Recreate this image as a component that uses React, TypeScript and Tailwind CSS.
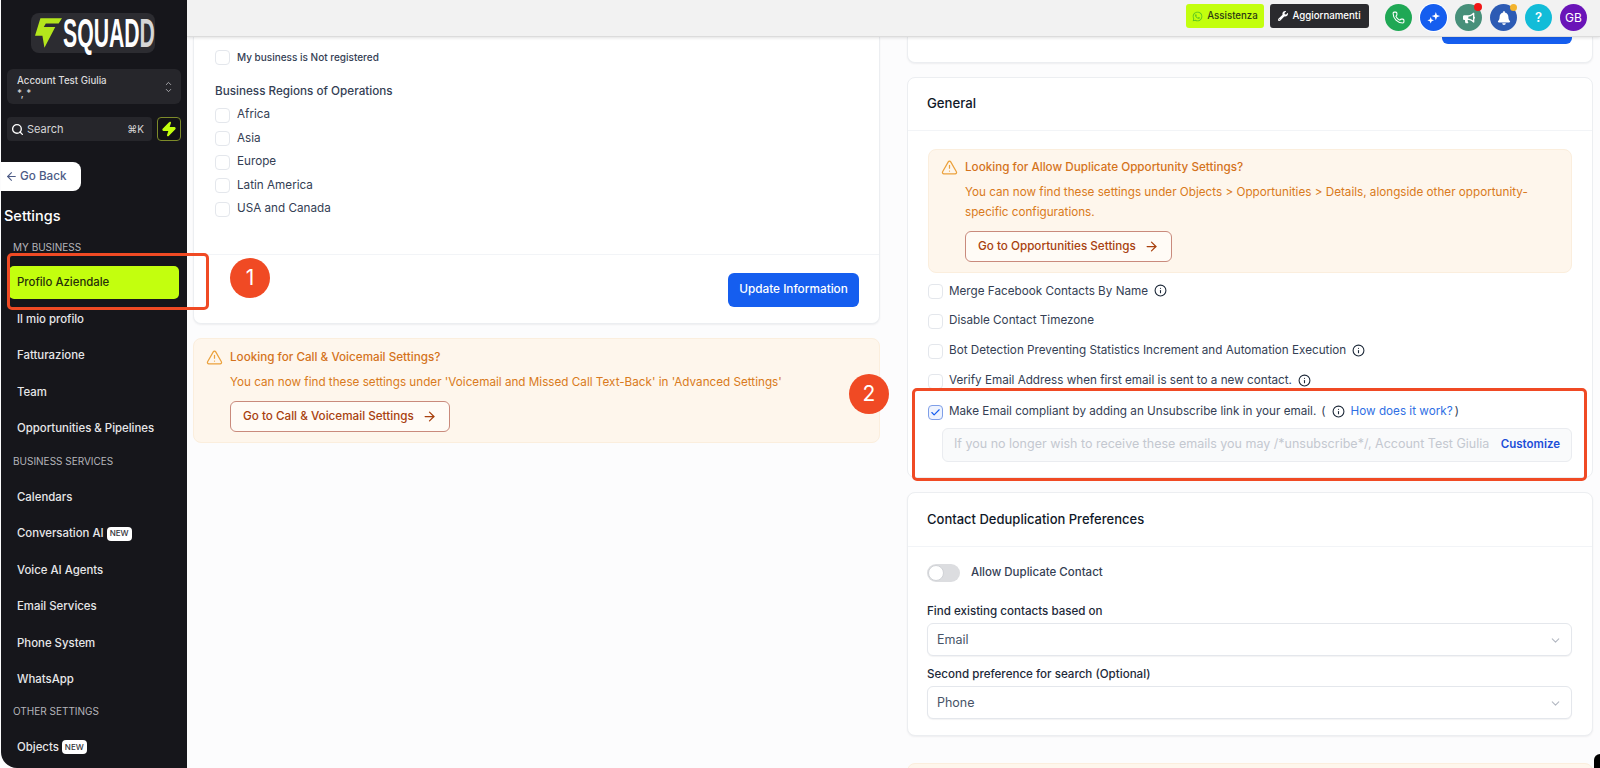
import { useState } from "react";
import {
  ArrowLeft,
  ArrowRight,
  Check,
  ChevronDown,
  ChevronUp,
  Info,
  Phone,
  Search,
  TriangleAlert,
  Zap,
} from "lucide-react";
import { FaBell, FaBullhorn, FaWhatsapp, FaWrench } from "react-icons/fa";

function NavItem({ label, badge }: { label: string; badge?: boolean }) {
  return (
    <div className="flex h-[36.5px] items-center gap-[3px] pl-[16px] text-[11.4px] font-medium text-[#e6e6e8]">
      {label}
      {badge && (
        <span className="rounded-[4px] bg-white px-[3px] py-[1.5px] text-[8px] leading-[11px] font-medium text-[#33343a]">
          NEW
        </span>
      )}
    </div>
  );
}

function NavHeading({ label, className }: { label: string; className: string }) {
  return (
    <div className={`h-3 pl-[12px] text-[10px] leading-3 text-[#b5b5ba] uppercase ${className}`}>
      {label}
    </div>
  );
}

function Sidebar() {
  return (
    <aside className="ml-px flex h-full w-[186px] shrink-0 flex-col overflow-hidden rounded-bl-2xl bg-[#16161b] pt-[13px]">
      <div className="ml-[30px] flex h-10 w-[124px] items-center rounded-lg bg-[#2c2c31] pl-1">
        <svg viewBox="0 0 80 88" className="h-[30px] w-[27px] shrink-0">
          <path d="M16 0H80L70 16H32L26 26H60L28 88L22 52H0Z" fill="#b4e61c" />
        </svg>
        <div className="ml-px w-[88px] shrink-0">
          <span className="block origin-left scale-x-[0.53] font-['Liberation_Sans',sans-serif] text-[40px] leading-none font-bold whitespace-nowrap text-white">
            SQUAD<span className="text-[#d6d6d6]">D</span>
          </span>
        </div>
      </div>

      <div className="mx-[6px] mt-4 flex h-[35px] items-center justify-between rounded-md bg-[#26262b] pr-2 pl-[10px]">
        <div className="text-[9.7px] leading-[13px] font-medium text-[#dcdcde]">
          <div>Account Test Giulia</div>
          <div>*, *</div>
        </div>
        <div className="flex flex-col text-[#c8c8cc]">
          <ChevronUp className="-mb-0.5 h-[9px] w-[9px]" />
          <ChevronDown className="h-[9px] w-[9px]" />
        </div>
      </div>

      <div className="mx-[6px] mt-[13px] flex h-6 gap-[5px]">
        <div className="flex w-[145px] items-center rounded bg-[#26262b] pr-2 pl-[4px] text-[11px] text-[#d6d6d8]">
          <Search className="mr-[3px] h-[13px] w-[13px] text-white" strokeWidth={2.5} />
          <span>Search</span>
          <span className="ml-auto text-[10px]">⌘K</span>
        </div>
        <div className="flex h-6 w-6 items-center justify-center rounded border border-[#7d8a2a] bg-[#121214]">
          <Zap className="h-4 w-4 fill-[#c3ff0e] text-[#c3ff0e]" />
        </div>
      </div>

      <div className="-ml-px mt-[21px] flex h-[29px] w-[81px] items-center rounded-r-lg bg-white pl-[5px] text-[11.7px] font-medium text-[#4d5b86]">
        <ArrowLeft className="mr-[2px] h-[13px] w-[13px]" />
        Go Back
      </div>

      <div className="mt-[13px] h-6 pl-[3px] text-[14.5px] leading-6 font-medium text-white">Settings</div>
      <NavHeading label="My Business" className="mt-[13px]" />
      <div className="mt-[13px] ml-2 flex h-[33px] w-[170px] items-center rounded-[5px] bg-[#c3ff0e] pl-2 text-[11.4px] font-medium text-[#26300a]">
        Profilo Aziendale
      </div>
      <div className="mt-0.5">
        <NavItem label="Il mio profilo" />
        <NavItem label="Fatturazione" />
        <NavItem label="Team" />
        <NavItem label="Opportunities & Pipelines" />
      </div>
      <NavHeading label="Business Services" className="mt-[8px]" />
      <div className="mt-[12px]">
        <NavItem label="Calendars" />
        <NavItem label="Conversation AI" badge />
        <NavItem label="Voice AI Agents" />
        <NavItem label="Email Services" />
        <NavItem label="Phone System" />
        <NavItem label="WhatsApp" />
      </div>
      <NavHeading label="Other Settings" className="mt-[7px]" />
      <div className="mt-[12px]">
        <NavItem label="Objects" badge />
      </div>
    </aside>
  );
}

function RoundIcon({ className, children }: { className: string; children: React.ReactNode }) {
  return (
    <div className={`relative flex h-[27px] w-[27px] items-center justify-center rounded-full text-white ${className}`}>
      {children}
    </div>
  );
}

function TopBar() {
  return (
    <header className="relative z-10 flex h-[37px] shrink-0 items-start justify-end border-b border-[#dcdcdc] bg-[#f2f2f2] pt-1 pr-[13px] shadow-[0_1px_3px_rgba(0,0,0,0.12)]">
      <div className="flex h-6 w-[78px] items-center justify-center gap-1 rounded-[3px] bg-[#c3ff0e] text-[9.7px] font-medium text-[#2c3a12]">
        <FaWhatsapp className="h-[11px] w-[11px] text-[#58c322]" />
        Assistenza
      </div>
      <div className="ml-[6px] flex h-6 w-[99px] items-center justify-center gap-1 rounded-[3px] bg-[#2a2a2e] text-[9.7px] font-medium text-white">
        <FaWrench className="h-[10px] w-[10px]" />
        Aggiornamenti
      </div>
      <div className="ml-[16px] flex gap-2">
        <RoundIcon className="bg-[#1fa855]">
          <Phone className="h-[13px] w-[13px]" />
        </RoundIcon>
        <RoundIcon className="bg-[#155eef] ring-1 ring-white">
          <svg viewBox="0 0 16 16" className="h-[15px] w-[15px]" fill="white">
            <path d="M10.5 2 11.6 5.4 15 6.5 11.6 7.6 10.5 11 9.4 7.6 6 6.5 9.4 5.4Z" />
            <path d="M5 7.5 6 10 8.5 11 6 12 5 14.5 4 12 1.5 11 4 10Z" />
          </svg>
        </RoundIcon>
        <RoundIcon className="bg-[#47907a]">
          <FaBullhorn className="h-3 w-3" />
          <span className="absolute -top-px right-0 h-2 w-2 rounded-full bg-[#f01616]" />
        </RoundIcon>
        <RoundIcon className="bg-[#2c5bb4]">
          <FaBell className="h-[14px] w-[14px]" />
          <span className="absolute top-0 right-0 h-[7px] w-[7px] rounded-full bg-[#f3b32c]" />
        </RoundIcon>
        <RoundIcon className="bg-[#12bcd8] text-[13px] font-semibold">?</RoundIcon>
        <RoundIcon className="bg-[#6a14b8] text-[12px]">GB</RoundIcon>
      </div>
    </header>
  );
}

function Box({ checked = false }: { checked?: boolean }) {
  return (
    <span
      className={`flex h-[15px] w-[15px] shrink-0 items-center justify-center rounded-[4px] border ${
        checked ? "border-[#7f9fe8] bg-[#eef3fe]" : "border-[#e4e7ec] bg-white"
      }`}
    >
      {checked && <Check className="h-[11px] w-[11px] text-[#155eef]" strokeWidth={2.5} />}
    </span>
  );
}

function Notice({
  title,
  lines,
  action,
  className,
}: {
  title: string;
  lines: string[];
  action: string;
  className: string;
}) {
  return (
    <div className={`rounded-lg border border-[#fbeedd] bg-[#fef6ec] ${className}`}>
      <div className="flex h-[15px] items-center text-[11.7px] font-medium text-[#d4731c]">
        <TriangleAlert className="mr-[7px] h-[17px] w-[17px] text-[#eba13c]" strokeWidth={1.75} />
        {title}
      </div>
      <div className="mt-[7px] ml-[24px] text-[11.7px] leading-5 text-[#d97a20]">
        {lines.map((line) => (
          <div key={line}>{line}</div>
        ))}
      </div>
      <div className="mt-[9px] ml-[24px] inline-flex h-[31px] items-center gap-2 rounded-md border border-[#c98a7c] bg-white/50 px-3 text-[11.7px] font-medium text-[#a8410f]">
        {action}
        <ArrowRight className="h-[15px] w-[15px]" />
      </div>
    </div>
  );
}

function CheckRow({ label, info, className }: { label: string; info?: boolean; className: string }) {
  return (
    <div className={`flex h-[15px] items-center gap-[6px] text-[11.7px] text-[#344054] ${className}`}>
      <Box />
      <span>{label}</span>
      {info && <Info className="h-[13px] w-[13px] -translate-y-px text-[#1d2939]" />}
    </div>
  );
}

function SelectField({ label, value, className }: { label: string; value: string; className: string }) {
  return (
    <div className={className}>
      <div className="h-4 text-[11.6px] leading-4 font-medium text-[#1d2939]">{label}</div>
      <div className="mt-[4px] flex h-[33px] items-center justify-between rounded-md border border-[#e4e7ec] bg-white px-[9px] pt-px text-[12.5px] text-[#475467] shadow-[0_1px_1px_rgba(16,24,40,0.05)]">
        {value}
        <ChevronDown className="h-[13px] w-[13px] text-[#b3b8c2]" />
      </div>
    </div>
  );
}

function LeftColumn() {
  const regions = ["Africa", "Asia", "Europe", "Latin America", "USA and Canada"];
  return (
    <div className="flex w-[687px] shrink-0 flex-col">
      <div className="h-[287px] rounded-b-lg border border-t-0 border-[#eceef1] bg-white shadow-[0_1px_2px_rgba(16,24,40,0.06)]">
        <div className="h-[218px] border-b border-[#f2f4f7] pt-[13px] pl-[21px]">
          <div className="flex items-center gap-[7px] text-[10px] font-medium text-[#344054]">
            <Box />
            My business is Not registered
          </div>
          <div className="mt-[18px] text-[11.7px] font-medium text-[#344054]">Business Regions of Operations</div>
          {regions.map((region, i) => (
            <div
              key={region}
              className={`flex h-[15px] items-center gap-[7px] text-[11.7px] text-[#344054] ${i === 0 ? "mt-[7px]" : "mt-[8.5px]"}`}
            >
              <Box />
              {region}
            </div>
          ))}
        </div>
        <div className="flex justify-end pt-[18px] pr-[20px]">
          <div className="flex h-[34px] w-[131px] items-center justify-center rounded-md bg-[#155eef] text-[11.8px] font-medium text-white">
            Update Information
          </div>
        </div>
      </div>
      <Notice
        title="Looking for Call & Voicemail Settings?"
        lines={["You can now find these settings under 'Voicemail and Missed Call Text-Back' in 'Advanced Settings'"]}
        action="Go to Call & Voicemail Settings"
        className="mt-[14px] h-[105px] pt-[11px] pl-[12px]"
      />
    </div>
  );
}

function RightColumn() {
  const [allowDuplicates] = useState(false);
  return (
    <div className="flex w-[686px] shrink-0 flex-col">
      <div className="h-[26px] rounded-b-lg border border-t-0 border-[#eceef1] bg-white shadow-[0_1px_2px_rgba(16,24,40,0.06)]">
        <div className="mr-[20px] ml-auto h-[7px] w-[130px] rounded-b-md bg-[#155eef]" />
      </div>

      <div className="mt-[14px] h-[401px] rounded-lg border border-[#eceef1] bg-white">
        <div className="flex h-[53px] items-center border-b border-[#f2f4f7] pb-px pl-[19px] text-[13.2px] font-medium text-[#101828]">
          General
        </div>
        <div className="px-5 pt-[18px]">
          <Notice
            title="Looking for Allow Duplicate Opportunity Settings?"
            lines={[
              "You can now find these settings under Objects > Opportunities > Details, alongside other opportunity-",
              "specific configurations.",
            ]}
            action="Go to Opportunities Settings"
            className="h-[124px] pt-[10px] pl-[12px]"
          />
          <CheckRow label="Merge Facebook Contacts By Name" info className="mt-[11px]" />
          <CheckRow label="Disable Contact Timezone" className="mt-[14.5px]" />
          <CheckRow label="Bot Detection Preventing Statistics Increment and Automation Execution" info className="mt-[15px]" />
          <CheckRow label="Verify Email Address when first email is sent to a new contact." info className="mt-[15px]" />
          <div className="mt-[16px] flex h-[15px] items-center gap-[6px] text-[11.7px] text-[#344054]">
            <Box checked />
            <span>Make Email compliant by adding an Unsubscribe link in your email.</span>
            <span className="-ml-px">(</span>
            <Info className="h-[13px] w-[13px] -translate-y-px text-[#1d2939]" />
            <span className="text-[#2f6fe4]">How does it work?</span>
            <span className="-ml-1">)</span>
          </div>
          <div className="mt-[8px] ml-[14px] flex h-[34px] items-center justify-between rounded-md border border-[#eaecf0] bg-[#f9fafb] px-[11px] text-[12.5px] text-[#c4c8d0]">
            If you no longer wish to receive these emails you may /*unsubscribe*/, Account Test Giulia
            <span className="text-[11.5px] font-semibold text-[#1d4ed8]">Customize</span>
          </div>
        </div>
      </div>

      <div className="mt-[14px] h-[244px] rounded-lg border border-[#eceef1] bg-white shadow-[0_1px_2px_rgba(16,24,40,0.06)]">
        <div className="flex h-[54px] items-center border-b border-[#f2f4f7] pl-[19px] text-[13px] font-medium text-[#101828]">
          Contact Deduplication Preferences
        </div>
        <div className="pr-5 pl-[19px]">
          <div className="mt-[17px] flex items-center gap-[11px] text-[11.5px] font-medium text-[#344054]">
            <span className={`flex h-[18px] w-[33px] items-center rounded-full p-px ${allowDuplicates ? "bg-[#155eef]" : "bg-[#dcdde0]"}`}>
              <span className="h-4 w-4 rounded-full border border-[#d0d2d6] bg-white" />
            </span>
            Allow Duplicate Contact
          </div>
          <SelectField label="Find existing contacts based on" value="Email" className="mt-[21px]" />
          <SelectField label="Second preference for search (Optional)" value="Phone" className="mt-[10px]" />
        </div>
      </div>

      <div className="mt-[27px] h-10 rounded-t-lg border border-[#fbeedd] bg-[#fef6ec]" />
    </div>
  );
}

export default function App() {
  return (
    <div className="relative flex h-[768px] w-[1600px] overflow-hidden bg-[#fcfcfd] font-[Inter,sans-serif]">
      <Sidebar />
      <main className="flex min-w-0 flex-1 flex-col">
        <TopBar />
        <div className="flex gap-[27px] pl-[6px]">
          <LeftColumn />
          <RightColumn />
        </div>
      </main>

      {/* annotazioni sopra lo screenshot */}
      <div className="absolute top-[253px] left-[7px] h-[57px] w-[202px] rounded-[5px] border-[3px] border-[#f04a24]" />
      <div className="absolute top-[258px] left-[230px] flex h-10 w-10 items-center justify-center rounded-full bg-[#f04a24] text-[21px] text-white">
        1
      </div>
      <div className="absolute top-[374px] left-[849px] flex h-10 w-10 items-center justify-center rounded-full bg-[#f04a24] text-[21px] text-white">
        2
      </div>
      <div className="absolute top-[388px] left-[912px] h-[93px] w-[675px] rounded-[5px] border-[3px] border-[#f04a24]" />
      <div className="absolute right-0 bottom-0 h-[14px] w-[6px] rounded-tl-full bg-black" />
    </div>
  );
}
